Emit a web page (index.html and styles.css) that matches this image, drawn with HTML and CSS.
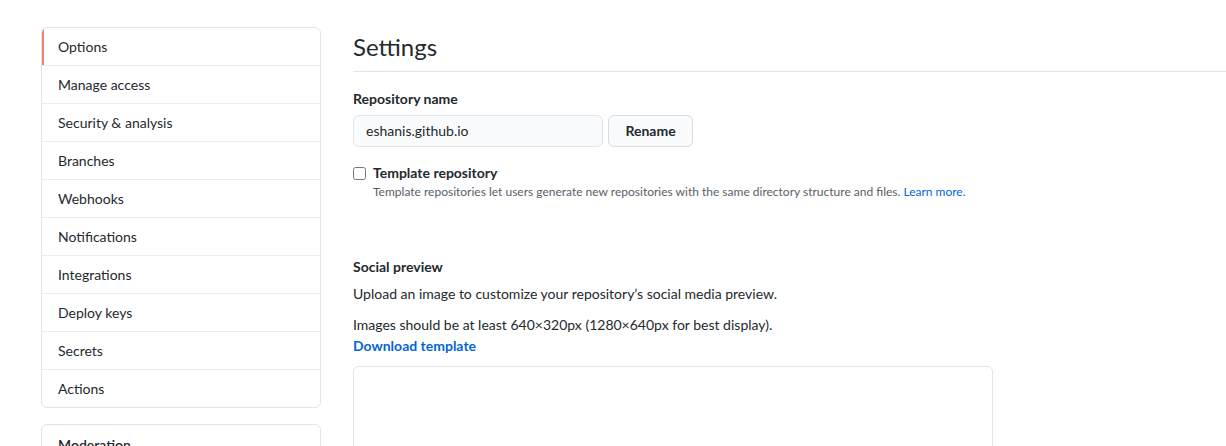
FILE: index.html
```html
<!DOCTYPE html>
<html>
<head>
<meta charset="utf-8">
<link rel="stylesheet" href="styles.css">
</head>
<body>
<div class="layout">
  <aside class="sidebar">
    <nav class="menu">
      <a class="menu-item selected">Options</a>
      <a class="menu-item">Manage access</a>
      <a class="menu-item">Security &amp; analysis</a>
      <a class="menu-item">Branches</a>
      <a class="menu-item">Webhooks</a>
      <a class="menu-item">Notifications</a>
      <a class="menu-item">Integrations</a>
      <a class="menu-item">Deploy keys</a>
      <a class="menu-item">Secrets</a>
      <a class="menu-item">Actions</a>
    </nav>
    <nav class="menu">
      <div class="menu-heading">Moderation</div>
    </nav>
  </aside>
  <main class="main">
    <h2 class="title">Settings</h2>
    <div class="form-group">
      <label class="label">Repository name</label>
      <div class="row">
        <input class="input" type="text" value="eshanis.github.io">
        <button class="btn">Rename</button>
      </div>
    </div>
    <div class="check">
      <input type="checkbox" class="checkbox">
      <div>
        <div class="check-label">Template repository</div>
        <p class="note">Template repositories let users generate new repositories with the same directory structure and files. <a class="link">Learn more</a>.</p>
      </div>
    </div>
    <div class="social">
      <div class="label">Social preview</div>
      <p class="para">Upload an image to customize your repository’s social media preview.</p>
      <p class="para tight">Images should be at least 640×320px (1280×640px for best display).<br><a class="link bold">Download template</a></p>
      <div class="preview"></div>
    </div>
  </main>
</div>
</body>
</html>
```
FILE: styles.css
```css
* { box-sizing: border-box; }
html, body { margin: 0; padding: 0; background: #fff; overflow: hidden; }
body {
  font-family: Lato, "Noto Sans", "Liberation Sans", sans-serif;
  font-size: 14px;
  line-height: 1.5;
  color: #24292e;
}
.layout {
  display: flex;
  gap: 32px;
  padding: 27px 0 0 41px;
  width: 1300px;
  height: 446px;
  overflow: hidden;
}
.sidebar {
  width: 280px;
  flex: none;
  display: flex;
  flex-direction: column;
  gap: 16px;
}
.menu {
  border: 1px solid #e1e4e8;
  border-radius: 6px;
  overflow: hidden;
  flex: none;
}
.menu-item, .menu-heading {
  display: block;
  height: 38px;
  padding: 7px 16px;
  border-top: 1px solid #eaecef;
  color: #24292e;
  line-height: 24px;
}
.menu-item:first-child { border-top: 0; height: 37px; }
.menu-item.selected { box-shadow: inset 2px 0 0 #f9826c; }
.menu-heading { border-top: 0; font-weight: 600; padding-top: 8px; }
.main { flex: 1; }
.title {
  margin: 0 0 16px;
  font-size: 24px;
  font-weight: 400;
  line-height: 30px;
  padding-top: 5px;
  border-bottom: 1px solid #e1e4e8;
  height: 45px;
}
.label { display: block; font-weight: 700; margin-bottom: 6px; height: 21px; }
.row { display: flex; gap: 5px; }
.input {
  width: 250px;
  height: 32px;
  padding: 4px 12px 6px;
  font: inherit;
  font-size: 14px;
  color: #24292e;
  background: #fafbfc;
  border: 1px solid #e1e4e8;
  border-radius: 6px;
  outline: none;
}
.btn {
  width: 85px;
  height: 32px;
  padding: 0 0 2px;
  font: inherit;
  font-weight: 700;
  color: #24292e;
  background: #fafbfc;
  border: 1px solid #d8dbdf;
  border-radius: 6px;
}
.check { display: flex; gap: 7px; margin-top: 16px; }
.checkbox {
  margin: 4px 0 0;
  width: 13px;
  height: 13px;
  flex: none;
}
.check-label { font-weight: 700; line-height: 20px; }
.note { margin: 0; font-size: 12px; color: #586069; line-height: 18px; }
.link { color: #0366d6; text-decoration: none; }
.bold { font-weight: 700; }
.social { margin-top: 55px; }
.para { margin: 0 0 10px; line-height: 21px; }
.para.tight { margin-bottom: 10px; }
.preview {
  width: 640px;
  height: 320px;
  border: 1px solid #e1e4e8;
  border-radius: 6px;
}
```
